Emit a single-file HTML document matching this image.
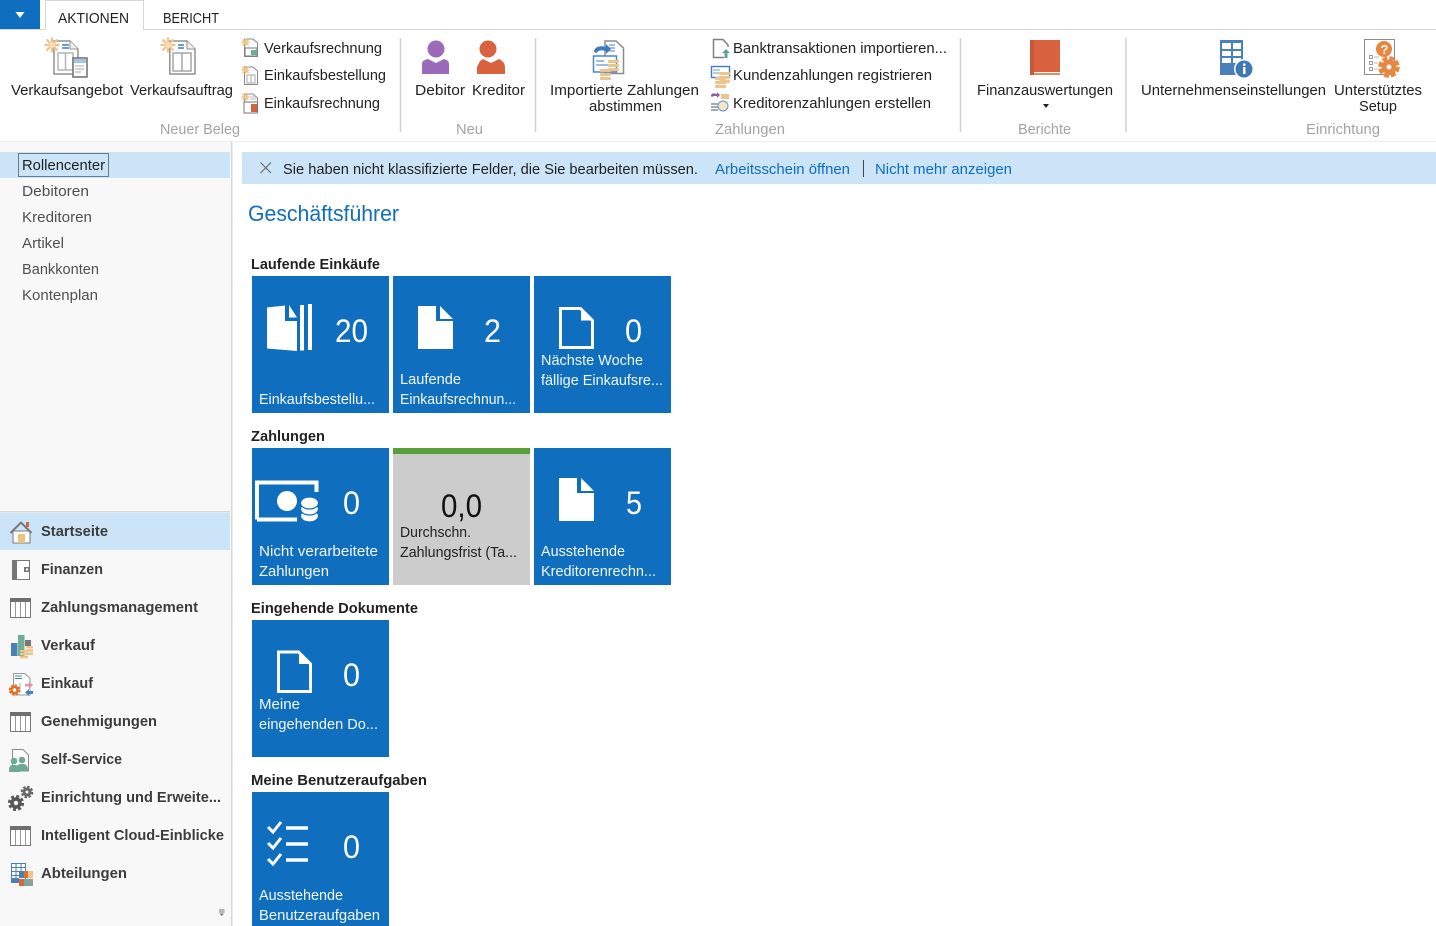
<!DOCTYPE html>
<html lang="de"><head><meta charset="utf-8"><title>Rollencenter</title>
<style>
html,body{margin:0;padding:0;background:#fff;width:1436px;height:926px;overflow:hidden}
svg{display:block}
text{font-family:"Liberation Sans",sans-serif;font-size:14.6px;fill:#222;white-space:pre}
.g{fill:#a3a3a3}.n{fill:#505050}
.b{font-weight:bold;fill:#3c3c3c}.h{font-weight:bold;fill:#222}
.l{fill:#0f6ec0}.w{fill:#f2f7fc}
.d{font-size:32px;fill:#fff}
</style></head><body>
<svg xmlns="http://www.w3.org/2000/svg" width="1436" height="926" viewBox="0 0 1436 926">
<defs>
<g id="burst" stroke="#edc48c" stroke-width="2.200" fill="none"><path d="M-7.500 0H7.500M0-7.500V7.500M-5.500-5.500L5.500 5.500M-5.500 5.500L5.500-5.500"/><circle r="3" fill="#f6dcb4" stroke="none"/></g>
<g id="sb" stroke="#edc48c" stroke-width="1.500" fill="none"><path d="M-4 0H4M0-4V4M-3-3L3 3M-3 3L3-3"/></g>
<g id="tbl"><rect x="10.500" y="1.500" width="20" height="18" fill="#fff" stroke="#777"/><rect x="10" y="0" width="21" height="4" fill="#6f6f6f"/><path d="M15.500 4V19M20.500 4V19M25.500 4V19" stroke="#999"/></g>
<g id="coin"><rect x="0" y="0" width="11" height="3" rx="1" fill="#edc48c"/><rect x="0" y="4" width="11" height="3" rx="1" fill="#edc48c"/><rect x="0" y="8" width="11" height="3" rx="1" fill="#edc48c"/></g>
</defs>

<rect x="0" y="29" width="1436" height="1" fill="#d6d6d6"/>
<rect x="0" y="0" width="40" height="29" fill="#106ebe"/>
<path d="M15.500 12H24.500L20 18Z" fill="#fff"/>
<path d="M45.500 30V.5H143.500V30" fill="#fff" stroke="#d6d6d6"/>
<rect x="46" y="29" width="97" height="1.500" fill="#fff"/>
<text x="58" y="23" textLength="71" lengthAdjust="spacingAndGlyphs">AKTIONEN</text>
<text x="163" y="23" textLength="56" lengthAdjust="spacingAndGlyphs">BERICHT</text>

<!-- Ribbon icons -->
<g>
<path d="M54 41H70L78 49V74H54Z" fill="#fff" stroke="#909090" stroke-width="1.500"/>
<path d="M70 41V49H78" fill="#f0f0f0" stroke="#909090"/>
<path d="M58 53H73V70H58ZM65.500 53V70" fill="none" stroke="#b5b5b5" stroke-width="1.500"/>
<path d="M62 45H69M62 48H69" stroke="#3f7cc0" stroke-width="1.500"/>
<use href="#burst" x="52" y="45"/>
<rect x="73" y="58" width="14" height="19" fill="#fff" stroke="#6e6e6e" stroke-width="1.500"/>
<rect x="74" y="59" width="12" height="4" fill="#a9c5e6"/>
<path d="M75 66H84M75 69H84M75 72H81" stroke="#aaa"/>
</g>
<g>
<path d="M169.800 41H187L195 49V74H169.800Z" fill="#fff" stroke="#909090" stroke-width="1.500"/>
<path d="M187 41V49H195" fill="#f0f0f0" stroke="#909090"/>
<path d="M173 53H191V71H173ZM182 53V71" fill="none" stroke="#a5a5a5" stroke-width="1.500"/>
<path d="M178 45H184M178 48H184" stroke="#3f7cc0" stroke-width="1.500"/>
<use href="#burst" x="168" y="45"/>
</g>
<g>
<path d="M244.500 39H253L257.500 43V56.500H244.500Z" fill="#fff" stroke="#888"/><rect x="245" y="48" width="12" height="8" fill="#fff" stroke="#777"/><rect x="251" y="50" width="6" height="5" fill="#6fae95"/><use href="#sb" x="245.500" y="42.500"/>
<path d="M244.500 67H253L257.500 71V84.500H244.500Z" fill="#fff" stroke="#888"/><path d="M247 75H255V83H247ZM251 75V83" fill="none" stroke="#aaa"/><use href="#sb" x="245.500" y="70"/>
<path d="M244.500 94H253L257.500 98V112.500H244.500Z" fill="#fff" stroke="#888"/><path d="M250 97H256M250 99H256" stroke="#bbb"/><rect x="244" y="102" width="13.500" height="11" fill="#fff" stroke="#777"/><rect x="251" y="104" width="6" height="8" fill="#d8603f"/><use href="#sb" x="245.500" y="97"/>
</g>
<g fill="#9b6ab9"><circle cx="436" cy="49" r="8.500"/><path d="M422 74V64Q422 60 428 59L436 63L444 59Q449 60 449 64V74Z"/></g>
<g fill="#d9623f"><circle cx="488" cy="49" r="8.500"/><path d="M477 74V67L480 61L483 59L491 63L499 59Q505 62 505 67V74Z"/></g>
<g>
<path d="M605 41H616L623.500 48V73.500H605Z" fill="#fff" stroke="#8c8c8c" stroke-width="1.500"/>
<path d="M609 45H615M609 48H615M609 51H615" stroke="#3f7cc0"/>
<path d="M594 52C594 47 600 45 606 47L606 44L611 49L606 54V51C601 50 598 50 597 53Z" fill="#3b7abe"/>
<rect x="593.500" y="56" width="23" height="16" fill="#fff" stroke="#4a85c4" stroke-width="1.500"/>
<path d="M596 61H604M596 65H608" stroke="#7fa8d4" stroke-width="1.500"/>
<use href="#coin" x="608" y="60"/><use href="#coin" x="600" y="69"/>
</g>
<g>
<path d="M728 47V45L723 39.500H713.500V57.500H724" fill="#fff" stroke="#808080" stroke-width="1.500"/>
<path d="M726 49L730 53H727.500V58H724.500V53H722Z" fill="#5fa58b"/>
<rect x="711.500" y="66.500" width="18" height="11" fill="#fff" stroke="#3f7cc0" stroke-width="1.400"/>
<path d="M713 70H720M713 73H720" stroke="#6f9bcf"/>
<use href="#coin" x="719" y="72"/>
<use href="#coin" x="715" y="77"/>
<path d="M711 96C711 93 714 93 717 94V92L720 95L717 98V96C715 96 713 96 712 97Z" fill="#8a5fae"/>
<rect x="721" y="94" width="8" height="5" fill="#edc48c"/>
<rect x="711" y="103" width="7" height="2" fill="#aaa"/><rect x="711" y="106" width="7" height="2" fill="#aaa"/><rect x="711" y="109" width="7" height="2" fill="#aaa"/>
<circle cx="723" cy="106" r="5" fill="#f8e5c8" stroke="#5f94cc"/>
</g>
<g>
<rect x="1030" y="40" width="30" height="33" fill="#d9623f"/><rect x="1030" y="40" width="4" height="35" fill="#c9573a"/><rect x="1034" y="73" width="26" height="2" fill="#e08a6c"/><rect x="1034" y="72" width="26" height="1" fill="#fff"/>
<path d="M1043 104H1049L1046 108Z" fill="#222"/>
</g>
<g>
<rect x="1220" y="40" width="23" height="35" fill="#4a7fb9"/>
<path d="M1222 43H1231V49H1222ZM1233 43H1241V49H1233ZM1222 51H1231V56H1222ZM1233 51H1241V56H1233ZM1222 58H1231V63H1222ZM1233 58H1241V63H1233Z" fill="#fff"/>
<circle cx="1244" cy="69" r="10" fill="#fff"/><circle cx="1244" cy="69" r="8.500" fill="#3f79b5"/>
<rect x="1243" y="67" width="2.500" height="7" fill="#fff"/><rect x="1243" y="63.500" width="2.500" height="2.300" fill="#fff"/>
</g>
<g>
<rect x="1364.500" y="39.500" width="30" height="35" fill="#fff" stroke="#8c8c8c"/>
<circle cx="1384" cy="49" r="8" fill="#e8873f"/>
<text x="1380.500" y="54" style="font-size:13px;font-weight:bold;fill:#fff">?</text>
<path d="M1369.500 55.500h3v3h-3zM1369.500 61.500h3v3h-3zM1369.500 67.500h3v3h-3z" fill="#fff" stroke="#999"/>
<path d="M1374 57H1379M1374 63H1378M1374 69H1378" stroke="#bbb"/>
<circle cx="1389" cy="67" r="6" fill="#fff"/>
<circle cx="1389" cy="67" r="5" fill="#fff" stroke="#e8873f" stroke-width="5"/>
<circle cx="1389" cy="67" r="9" fill="none" stroke="#e8873f" stroke-width="3.500" stroke-dasharray="5 2.070"/>
</g>

<!-- Ribbon text -->
<text x="11" y="95" textLength="112" lengthAdjust="spacingAndGlyphs">Verkaufsangebot</text>
<text x="130" y="95" textLength="103" lengthAdjust="spacingAndGlyphs">Verkaufsauftrag</text>
<text x="264" y="53" textLength="118" lengthAdjust="spacingAndGlyphs">Verkaufsrechnung</text>
<text x="264" y="80" textLength="122" lengthAdjust="spacingAndGlyphs">Einkaufsbestellung</text>
<text x="264" y="108" textLength="116" lengthAdjust="spacingAndGlyphs">Einkaufsrechnung</text>
<text class="g" x="160" y="134" textLength="80" lengthAdjust="spacingAndGlyphs">Neuer Beleg</text>
<text x="415" y="95" textLength="50" lengthAdjust="spacingAndGlyphs">Debitor</text>
<text x="472" y="95" textLength="53" lengthAdjust="spacingAndGlyphs">Kreditor</text>
<text class="g" x="456" y="134" textLength="27" lengthAdjust="spacingAndGlyphs">Neu</text>
<text x="550" y="95" textLength="149" lengthAdjust="spacingAndGlyphs">Importierte Zahlungen</text>
<text x="589" y="111" textLength="73" lengthAdjust="spacingAndGlyphs">abstimmen</text>
<text x="733" y="53" textLength="214" lengthAdjust="spacingAndGlyphs">Banktransaktionen importieren...</text>
<text x="733" y="80" textLength="199" lengthAdjust="spacingAndGlyphs">Kundenzahlungen registrieren</text>
<text x="733" y="108" textLength="198" lengthAdjust="spacingAndGlyphs">Kreditorenzahlungen erstellen</text>
<text class="g" x="715" y="134" textLength="70" lengthAdjust="spacingAndGlyphs">Zahlungen</text>
<text x="977" y="95" textLength="136" lengthAdjust="spacingAndGlyphs">Finanzauswertungen</text>
<text class="g" x="1018" y="134" textLength="53" lengthAdjust="spacingAndGlyphs">Berichte</text>
<text x="1141" y="95" textLength="185" lengthAdjust="spacingAndGlyphs">Unternehmenseinstellungen</text>
<text x="1334" y="95" textLength="88" lengthAdjust="spacingAndGlyphs">Unterstütztes</text>
<text x="1359" y="111" textLength="38" lengthAdjust="spacingAndGlyphs">Setup</text>
<text class="g" x="1306" y="134" textLength="74" lengthAdjust="spacingAndGlyphs">Einrichtung</text>
<path d="M400.500 38V132M535.500 38V132M960.500 38V132M1126 38V132" stroke="#d2d2d2" stroke-width="1.500"/>
<rect x="0" y="141" width="1436" height="1" fill="#eeeeee"/>

<!-- Sidebar -->
<rect x="0" y="142" width="231" height="784" fill="#f8f8f8"/>
<rect x="231" y="142" width="1.500" height="784" fill="#d8d8d8"/>
<rect x="0" y="152" width="230" height="26" fill="#cce4f7"/>
<rect x="18.500" y="153.500" width="90" height="23" fill="none" stroke="#111" stroke-dasharray="1 1" shape-rendering="crispEdges"/>
<text x="22" y="170" textLength="83" lengthAdjust="spacingAndGlyphs">Rollencenter</text>
<text class="n" x="22" y="196" textLength="67" lengthAdjust="spacingAndGlyphs">Debitoren</text>
<text class="n" x="22" y="222" textLength="70" lengthAdjust="spacingAndGlyphs">Kreditoren</text>
<text class="n" x="22" y="248" textLength="42" lengthAdjust="spacingAndGlyphs">Artikel</text>
<text class="n" x="22" y="274" textLength="77" lengthAdjust="spacingAndGlyphs">Bankkonten</text>
<text class="n" x="22" y="300" textLength="76" lengthAdjust="spacingAndGlyphs">Kontenplan</text>

<rect x="0" y="511" width="230" height="1.500" fill="#d8d8d8"/>
<rect x="0" y="513" width="230" height="37" fill="#cce4f7"/>
<text class="b" x="41" y="536" textLength="67" lengthAdjust="spacingAndGlyphs">Startseite</text>
<text class="b" x="41" y="574" textLength="62" lengthAdjust="spacingAndGlyphs">Finanzen</text>
<text class="b" x="41" y="612" textLength="157" lengthAdjust="spacingAndGlyphs">Zahlungsmanagement</text>
<text class="b" x="41" y="650" textLength="54" lengthAdjust="spacingAndGlyphs">Verkauf</text>
<text class="b" x="41" y="688" textLength="52" lengthAdjust="spacingAndGlyphs">Einkauf</text>
<text class="b" x="41" y="726" textLength="116" lengthAdjust="spacingAndGlyphs">Genehmigungen</text>
<text class="b" x="41" y="764" textLength="81" lengthAdjust="spacingAndGlyphs">Self-Service</text>
<text class="b" x="41" y="802" textLength="180" lengthAdjust="spacingAndGlyphs">Einrichtung und Erweite...</text>
<text class="b" x="41" y="840" textLength="183" lengthAdjust="spacingAndGlyphs">Intelligent Cloud-Einblicke</text>
<text class="b" x="41" y="878" textLength="86" lengthAdjust="spacingAndGlyphs">Abteilungen</text>

<!-- Sidebar icons -->
<g>
<rect x="26" y="522" width="3" height="5" fill="#d9623f"/>
<rect x="13" y="531" width="17" height="12" fill="#fff" stroke="#7a7a7a"/>
<rect x="18" y="534" width="7" height="9" fill="#efc27c"/>
<path d="M10.500 533L21 522.500L31.500 533" fill="none" stroke="#777" stroke-width="2"/>
</g>
<g>
<rect x="12.500" y="560.500" width="17" height="19" fill="#fff" stroke="#777"/><rect x="12" y="560" width="5" height="20" fill="#777"/>
<rect x="24" y="567" width="6" height="5" fill="#777"/><circle cx="27" cy="569.500" r="1.200" fill="#fff"/>
</g>
<use href="#tbl" y="598"/>
<g>
<rect x="11" y="643" width="6.500" height="13" fill="#4a7fb9"/><rect x="18" y="635" width="6.500" height="21" fill="#6fae95"/><rect x="25" y="640" width="6" height="6" fill="#777"/>
<g transform="translate(26 646)"><rect width="7" height="2.500" fill="#edc48c"/><rect y="3.200" width="7" height="2.500" fill="#edc48c"/><rect y="6.400" width="7" height="2.500" fill="#edc48c"/></g>
<g transform="translate(20 650)"><rect width="8" height="2.300" fill="#edc48c"/><rect y="3" width="8" height="2.300" fill="#edc48c"/><rect y="6" width="8" height="2.300" fill="#edc48c"/></g>
</g>
<g>
<path d="M13.500 673.500H25L30 678.500V695H13.500Z" fill="#fff" stroke="#999"/>
<path d="M15 676H22M15 678.500H22" stroke="#3f7cc0"/>
<path d="M20 683V692" stroke="#aaa"/>
<circle cx="14.500" cy="690" r="3" fill="#fff" stroke="#e0701f" stroke-width="2.500"/>
<circle cx="14.500" cy="690" r="4.800" fill="none" stroke="#e0701f" stroke-width="1.800" stroke-dasharray="2.500 1.270"/>
<path d="M25 684H29V681.500L33 685L29 688.500V686.500H25Z" fill="#e8919f"/>
<path d="M33 691H29V689L25 692.500L29 696V694H33Z" fill="#4a7fb9"/>
</g>
<use href="#tbl" y="712"/>
<g>
<path d="M12.500 749.500H23L28.500 755V771H12.500Z" fill="#fff" stroke="#8c8c8c"/>
<circle cx="22" cy="760" r="3.300" fill="#6fa894"/><path d="M16 771C16 765 18 764 22 764C26 764 28 765 28 771Z" fill="#6fa894"/>
<circle cx="14" cy="761" r="3.300" fill="#6fa894"/><path d="M9 772C9 766 10 765 14 765C18 765 20 766 20 772Z" fill="#6fa894"/>
</g>
<g fill="none">
<circle cx="16" cy="803" r="4" stroke="#555" stroke-width="3.500"/><circle cx="16" cy="803" r="6.800" stroke="#555" stroke-width="2.500" stroke-dasharray="3 2.340"/>
<circle cx="27" cy="792" r="3" stroke="#666" stroke-width="3"/><circle cx="27" cy="792" r="5.300" stroke="#666" stroke-width="2" stroke-dasharray="2.500 1.660"/>
</g>
<use href="#tbl" y="826"/>
<g>
<rect x="11.500" y="863.500" width="14" height="19" fill="#fff" stroke="#4a7fb9"/>
<path d="M11 867.500H25M11 871.500H25M11 875.500H25M16 863V882M21 863V878" stroke="#4a7fb9"/>
<rect x="11" y="878" width="8" height="5" fill="#4a7fb9"/>
<rect x="19" y="871" width="5" height="7" fill="#4a7fb9"/><rect x="24" y="871" width="4" height="7" fill="#e0701f"/><rect x="28" y="871" width="5" height="7" fill="#edc48c"/>
<rect x="19" y="879" width="5" height="7" fill="#d9623f"/><rect x="24" y="879" width="4.500" height="7" fill="#6fae95"/><rect x="28.500" y="879" width="4.500" height="7" fill="#999"/>
</g>
<path d="M219 910H224.500M219 912H224.500" stroke="#777"/><path d="M219.500 913.500H224L221.700 916Z" fill="#777"/>

<!-- Notification -->
<rect x="242" y="152" width="1194" height="32" fill="#cce4f7"/>
<path d="M260.500 162.500L271 173M271 162.500L260.500 173" stroke="#666" stroke-width="1.100"/>
<text x="283" y="174" fill="#333" textLength="415" lengthAdjust="spacingAndGlyphs">Sie haben nicht klassifizierte Felder, die Sie bearbeiten müssen.</text>
<text class="l" x="715" y="174" textLength="135" lengthAdjust="spacingAndGlyphs">Arbeitsschein öffnen</text>
<rect x="863" y="160" width="1" height="17" fill="#444"/>
<text class="l" x="875" y="174" textLength="137" lengthAdjust="spacingAndGlyphs">Nicht mehr anzeigen</text>
<text x="248" y="221" style="font-size:22px;fill:#106ebe" textLength="151" lengthAdjust="spacingAndGlyphs">Geschäftsführer</text>

<!-- Section headers -->
<text class="h" x="251" y="269" textLength="129" lengthAdjust="spacingAndGlyphs">Laufende Einkäufe</text>
<text class="h" x="251" y="441" textLength="74" lengthAdjust="spacingAndGlyphs">Zahlungen</text>
<text class="h" x="251" y="613" textLength="167" lengthAdjust="spacingAndGlyphs">Eingehende Dokumente</text>
<text class="h" x="251" y="785" textLength="176" lengthAdjust="spacingAndGlyphs">Meine Benutzeraufgaben</text>

<!-- Tiles -->
<g fill="#106ebe">
<rect x="252" y="276" width="137" height="137"/><rect x="393" y="276" width="137" height="137"/><rect x="534" y="276" width="137" height="137"/>
<rect x="252" y="448" width="137" height="137"/><rect x="534" y="448" width="137" height="137"/>
<rect x="252" y="620" width="137" height="137"/><rect x="252" y="792" width="137" height="134"/>
</g>
<rect x="393" y="448" width="137" height="137" fill="#cccccc"/><rect x="393" y="448" width="137" height="6" fill="#57a03a"/>

<!-- Tile icons -->
<g fill="#fff">
<path d="M267 307.500L285 305.500V321H297V351L267 348.500Z"/>
<path d="M289 305L297 317.500H289Z"/><rect x="300" y="305" width="4" height="45.500"/><rect x="308" y="304" width="4" height="46"/>
<path d="M418 306H436V321H453V349H418Z"/><path d="M440 306L453 319H440Z"/>
<path d="M559 478H577V493H594V521H559Z"/><path d="M581 478L594 491H581Z"/>
<circle cx="287" cy="501" r="10"/>
</g>
<g fill="none" stroke="#fff" stroke-width="3">
<path d="M560.500 308.500H580.500L592.500 320.500V347.500H560.500Z"/>
<path d="M278.500 652H298.500L310.500 664V691.500H278.500Z"/>
</g>
<path d="M257 519.500V482.500H316.500V492M257 519.500H297" fill="none" stroke="#fff" stroke-width="4"/>
<path d="M581 308L593 320.500H581Z" fill="#fff"/><path d="M299 651.500L311 664H299Z" fill="#fff"/>
<g fill="#fff" stroke="#106ebe" stroke-width="1.200"><ellipse cx="309.500" cy="516" rx="9" ry="6"/><ellipse cx="309.500" cy="509" rx="9" ry="6"/><ellipse cx="309.500" cy="503" rx="9" ry="6"/></g>
<path d="M268 827L273 832L281 822M268 843L273 848L281 838M268 859L273 864L281 854" fill="none" stroke="#fff" stroke-width="3"/>
<path d="M286 828H308M286 844H308M286 860H308" stroke="#fff" stroke-width="3.500"/>

<!-- Tile numbers -->
<text class="d" x="335" y="342" textLength="33" lengthAdjust="spacingAndGlyphs">20</text>
<text class="d" x="484" y="342" textLength="17" lengthAdjust="spacingAndGlyphs">2</text>
<text class="d" x="625" y="342" textLength="17" lengthAdjust="spacingAndGlyphs">0</text>
<text class="d" x="343" y="514" textLength="17" lengthAdjust="spacingAndGlyphs">0</text>
<text class="d" x="441" y="517" style="fill:#111" textLength="41" lengthAdjust="spacingAndGlyphs">0,0</text>
<text class="d" x="626" y="514" textLength="16" lengthAdjust="spacingAndGlyphs">5</text>
<text class="d" x="343" y="686" textLength="17" lengthAdjust="spacingAndGlyphs">0</text>
<text class="d" x="343" y="858" textLength="17" lengthAdjust="spacingAndGlyphs">0</text>

<!-- Tile labels -->
<text class="w" x="259" y="404" textLength="116" lengthAdjust="spacingAndGlyphs">Einkaufsbestellu...</text>
<text class="w" x="400" y="384" textLength="61" lengthAdjust="spacingAndGlyphs">Laufende</text>
<text class="w" x="400" y="404" textLength="116" lengthAdjust="spacingAndGlyphs">Einkaufsrechnun...</text>
<text class="w" x="541" y="365" textLength="102" lengthAdjust="spacingAndGlyphs">Nächste Woche</text>
<text class="w" x="541" y="385" textLength="122" lengthAdjust="spacingAndGlyphs">fällige Einkaufsre...</text>
<text class="w" x="259" y="556" textLength="119" lengthAdjust="spacingAndGlyphs">Nicht verarbeitete</text>
<text class="w" x="259" y="576" textLength="70" lengthAdjust="spacingAndGlyphs">Zahlungen</text>
<text x="400" y="537" textLength="71" lengthAdjust="spacingAndGlyphs">Durchschn.</text>
<text x="400" y="557" textLength="117" lengthAdjust="spacingAndGlyphs">Zahlungsfrist (Ta...</text>
<text class="w" x="541" y="556" textLength="84" lengthAdjust="spacingAndGlyphs">Ausstehende</text>
<text class="w" x="541" y="576" textLength="115" lengthAdjust="spacingAndGlyphs">Kreditorenrechn...</text>
<text class="w" x="259" y="709" textLength="41" lengthAdjust="spacingAndGlyphs">Meine</text>
<text class="w" x="259" y="729" textLength="119" lengthAdjust="spacingAndGlyphs">eingehenden Do...</text>
<text class="w" x="259" y="900" textLength="84" lengthAdjust="spacingAndGlyphs">Ausstehende</text>
<text class="w" x="259" y="920" textLength="121" lengthAdjust="spacingAndGlyphs">Benutzeraufgaben</text>
</svg>
</body></html>
